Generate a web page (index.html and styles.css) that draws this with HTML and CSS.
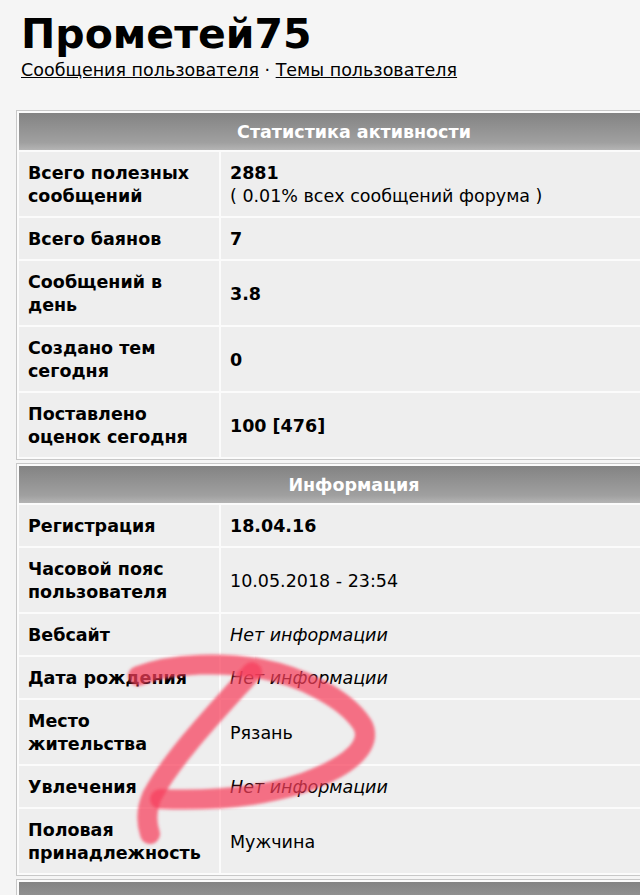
FILE: index.html
```html
<!DOCTYPE html>
<html lang="ru">
<head>
    <meta charset="UTF-8">
    <meta name="viewport" content="width=device-width, initial-scale=1.0">
    <title>Прометей75</title>
    <link rel="stylesheet" href="styles.css">
</head>
<body>

<div class="page">
    <!-- Profile header -->
    <div class="profile-head">
        <h1>Прометей75</h1>
        <div class="profile-links">
            <a href="#">Сообщения пользователя</a> · <a href="#">Темы пользователя</a>
        </div>
    </div>

    <!-- Activity stats -->
    <table class="info-box">
        <tr><th colspan="2">Статистика активности</th></tr>
        <tr>
            <td class="label">Всего полезных сообщений</td>
            <td><b>2881</b><br>( 0.01% всех сообщений форума )</td>
        </tr>
        <tr>
            <td class="label">Всего баянов</td>
            <td><b>7</b></td>
        </tr>
        <tr>
            <td class="label">Сообщений в день</td>
            <td><b>3.8</b></td>
        </tr>
        <tr>
            <td class="label">Создано тем сегодня</td>
            <td><b>0</b></td>
        </tr>
        <tr>
            <td class="label">Поставлено оценок сегодня</td>
            <td><b>100 [476]</b></td>
        </tr>
    </table>

    <!-- Info -->
    <table class="info-box">
        <tr><th colspan="2">Информация</th></tr>
        <tr>
            <td class="label">Регистрация</td>
            <td><b>18.04.16</b></td>
        </tr>
        <tr>
            <td class="label">Часовой пояс пользователя</td>
            <td>10.05.2018 - 23:54</td>
        </tr>
        <tr>
            <td class="label">Вебсайт</td>
            <td><i>Нет информации</i></td>
        </tr>
        <tr>
            <td class="label">Дата рождения</td>
            <td><i>Нет информации</i></td>
        </tr>
        <tr>
            <td class="label">Место жительства</td>
            <td>Рязань</td>
        </tr>
        <tr>
            <td class="label">Увлечения</td>
            <td><i>Нет информации</i></td>
        </tr>
        <tr>
            <td class="label">Половая принадлежность</td>
            <td>Мужчина</td>
        </tr>
    </table>

    <!-- next block, only its top edge is in view -->
    <table class="info-box">
        <tr><th colspan="2">&nbsp;</th></tr>
    </table>
</div>

<!-- marker scribble over the screenshot -->
<svg class="scribble" width="640" height="895" viewBox="0 0 640 895">
    <defs>
        <filter id="soft"><feGaussianBlur stdDeviation="1.4"/></filter>
    </defs>
    <g fill="none" stroke="rgba(246, 62, 92, 0.72)" stroke-width="20" stroke-linecap="round" filter="url(#soft)">
        <path d="M138 676 C175 662 225 662 262 669 C300 676 345 698 362 724 C374 744 350 764 318 777 C285 792 230 802 160 799"/>
        <path d="M252 672 C216 712 172 758 152 796 C146 810 146 822 150 834"/>
    </g>
</svg>

</body>
</html>
```

FILE: styles.css
```css
html, body {
    overflow: hidden;
}

body {
    margin: 0;
    background-color: #f5f5f5;
    font-family: 'DejaVu Sans', Verdana, sans-serif;
    font-size: 17.5px;
    color: #000;
}

.page {
    padding: 0 0 0 16px;
}

.profile-head {
    padding: 10px 0 0 5px;
    height: 110px;
    box-sizing: border-box;
}

h1 {
    margin: 0;
    font-size: 41px;
    line-height: 48px;
    font-weight: bold;
}

.profile-links {
    margin-top: 1px;
    line-height: 22px;
}

.profile-links a {
    color: #000;
    text-decoration: underline;
}

.info-box {
    width: 676px;
    border: 1px solid #c8c8c8;
    border-spacing: 2px;
    background-color: #fbfbfb;
    margin-bottom: 3px;
}

.info-box th {
    height: 37px;
    padding: 0;
    background: linear-gradient(#838383, #a0a0a0 80%, #b4b4b4);
    color: #fff;
    font-weight: bold;
    text-align: center;
}

.info-box td {
    padding: 10px 9px 8px;
    line-height: 23px;
    background-color: #eeeeee;
    vertical-align: middle;
}

.info-box td.label {
    width: 182px;
    font-weight: bold;
}

.scribble {
    position: absolute;
    top: 0;
    left: 0;
    pointer-events: none;
}
```
